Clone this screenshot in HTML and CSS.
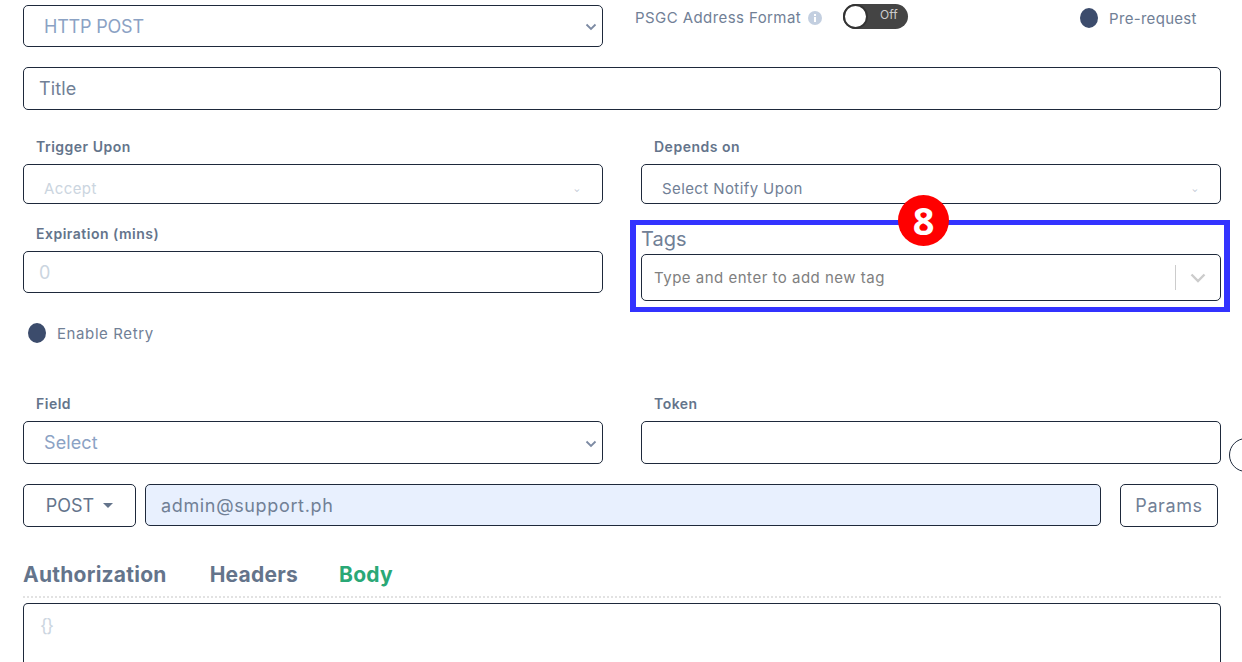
FILE: index.html
```html
<!DOCTYPE html>
<html lang="en">
<head>
<meta charset="utf-8">
<title>Request form</title>
<link rel="stylesheet" href="styles.css">
</head>
<body>
<main class="form">
  <div class="row top-row">
    <div class="box select-box h42"><span class="val blue-text http">HTTP POST</span>
      <svg class="chev" width="12" height="8" viewBox="0 0 12 8"><path d="M1.500 1.500 6 6l4.500-4.500" fill="none" stroke="#7c8aa3" stroke-width="1.800"/></svg>
    </div>
    <div class="top-right">
      <span class="psgc">PSGC Address Format</span>
      <svg class="info" width="14" height="14" viewBox="0 0 14 14"><circle cx="7" cy="7" r="7" fill="#c3cfe0"/><rect x="6" y="6" width="2" height="5" fill="#fff"/><rect x="6" y="3" width="2" height="2" fill="#fff"/></svg>
      <span class="toggle"><span class="knob"></span><span class="off">Off</span></span>
      <span class="check pre"><span class="dot"></span><span class="check-text">Pre-request</span></span>
    </div>
  </div>

  <div class="box title-box"><span class="val title-text">Title</span></div>

  <div class="row trigger-row">
    <div class="col">
      <label class="lbl">Trigger Upon</label>
      <div class="box small-select"><span class="small-val faint">Accept</span><span class="tiny">⌄</span></div>
    </div>
    <div class="col">
      <label class="lbl">Depends on</label>
      <div class="box small-select"><span class="small-val">Select Notify Upon</span><span class="tiny">⌄</span></div>
    </div>
  </div>

  <div class="row exp-row">
    <div class="col">
      <label class="lbl">Expiration (mins)</label>
      <div class="box h42"><span class="val zero">0</span></div>
      <div class="check retry"><span class="dot"></span><span class="check-text">Enable Retry</span></div>
    </div>
    <div class="col tags-col">
      <div class="tags-title">Tags</div>
      <div class="box tags-box">
        <span class="tags-ph">Type and enter to add new tag</span>
        <span class="tags-sep"></span>
        <svg class="tags-chev" width="16" height="10" viewBox="0 0 16 10"><path d="M1.500 1.500 8 8l6.500-6.500" fill="none" stroke="#ccc" stroke-width="2.400"/></svg>
      </div>
    </div>
  </div>

  <div class="row">
    <div class="col">
      <label class="lbl">Field</label>
      <div class="box select-box h43"><span class="val blue-text">Select</span>
        <svg class="chev" width="12" height="8" viewBox="0 0 12 8"><path d="M1.500 1.500 6 6l4.500-4.500" fill="none" stroke="#7c8aa3" stroke-width="1.800"/></svg>
      </div>
    </div>
    <div class="col">
      <label class="lbl">Token</label>
      <div class="box h43"></div>
    </div>
  </div>

  <div class="url-row">
    <div class="box method"><span>POST</span><span class="caret"></span></div>
    <div class="box url"><span>admin@support.ph</span></div>
    <div class="box params">Params</div>
  </div>

  <nav class="tabs">
    <span class="tab">Authorization</span>
    <span class="tab">Headers</span>
    <span class="tab active">Body</span>
  </nav>

  <div class="box body-box"><span class="braces">{}</span></div>
</main>

<div class="edge-circle"></div>
<div class="highlight"></div>
<div class="badge">8</div>
</body>
</html>
```
FILE: styles.css
```css
* { box-sizing: border-box; }
html, body { margin: 0; height: 662px; overflow: hidden; background: #fff; }
body { font-family: Inter, "Noto Sans", sans-serif; color: #64748b; position: relative; }

.form { padding: 5px 21px 0 23px; width: 1242px; }
.row { display: grid; grid-template-columns: 580px 580px; column-gap: 38px; }
.col { display: flex; flex-direction: column; min-width: 0; }

.box { border: 1px solid #1e293b; border-radius: 5px; background: #fff; display: flex; align-items: center; }
.h42 { height: 42px; }
.h43 { height: 43px; }
.select-box { justify-content: space-between; padding: 0 5px 0 20px; }
.val { font-size: 18px; letter-spacing: 0.1px; }
.blue-text { color: #8ba2c4; }
.http { letter-spacing: -0.2px; }
.chev { margin-top: 2px; }

.top-row { height: 42px; }
.top-right { display: flex; align-items: flex-start; margin-left: -6px; }
.psgc { font-size: 15px; letter-spacing: 0.42px; line-height: 18px; margin-top: 4px; color: #718096; }
.info { margin: 6px 0 0 7px; }
.toggle { margin: -1px 0 0 21px; width: 65px; height: 25px; background: #444; border-radius: 13px; display: flex; }
.knob { width: 25px; height: 25px; background: #fff; border: 2px solid #333; border-radius: 50%; }
.off { font-size: 12px; color: #ccc; margin: 3px 0 0 12px; }
.check { display: flex; align-items: center; }
.dot { width: 18px; height: 20px; border-radius: 50%; background: #3c4c6c; }
.check-text { font-size: 15px; letter-spacing: 0.3px; color: #718096; margin-left: 11px; }
.pre { margin: 3px 0 0 172px; }

.title-box { height: 43px; margin-top: 20px; width: 1198px; padding-left: 15px; }
.title-text { color: #718096; }

.trigger-row { margin-top: 27px; }
.lbl { font-size: 14px; letter-spacing: 0.5px; font-weight: 600; line-height: 20px; height: 20px; margin: 0 0 7px 13px; color: #64748b; }
.small-select { height: 40px; padding: 9px 22px 0 20px; justify-content: space-between; }
.small-val { font-size: 15px; letter-spacing: 0.4px; color: #718096; }
.faint { color: #cbd5e0; }
.tiny { font-size: 8px; color: #b8c2d0; line-height: 8px; }

.exp-row { margin-top: 20px; height: 170px; }
.zero { color: #cbd5e0; margin-left: 15px; }
.retry { margin: 30px 0 0 5px; }
.retry .check-text { letter-spacing: 0.6px; }

.tags-col { margin-top: 5px; }
.tags-title { font-size: 20px; line-height: 20px; height: 25px; color: #718096; }
.tags-box { height: 47px; padding-left: 12px; }
.tags-ph { font-size: 15px; letter-spacing: 0.5px; color: #808080; flex: 1; }
.tags-sep { width: 1px; height: 25px; background: #ccc; }
.tags-chev { margin: 1px 14px 0 14px; }

.url-row { display: flex; margin-top: 20px; align-items: flex-start; width: 1198px; }
.method { width: 113px; height: 43px; justify-content: center; gap: 9px; font-size: 18px; color: #64748b; }
.caret { width: 0; height: 0; border-left: 5px solid transparent; border-right: 5px solid transparent; border-top: 5px solid #64748b; }
.url { width: 956px; height: 42px; margin-left: 9px; background: #e8f0fe; padding-left: 15px; font-size: 18px; letter-spacing: 0.65px; color: #718096; }
.params { width: 98px; height: 43px; margin-left: 19px; justify-content: center; font-size: 18px; letter-spacing: 0.6px; color: #718096; }

.tabs { display: flex; margin-top: 35px; height: 36px; border-bottom: 2px dotted #e2e2e2; width: 1198px; align-items: flex-start; }
.tab { font-size: 21px; letter-spacing: 0.25px; font-weight: 700; line-height: 26px; color: #64748b; margin-right: 43px; }
.tab + .tab { margin-right: 41px; }
.tab.active { color: #2aa876; }

.body-box { width: 1198px; height: 120px; margin-top: 5px; align-items: flex-start; padding: 11px 16px; border-bottom: 0; border-radius: 5px 5px 0 0; }
.braces { font-size: 18px; letter-spacing: -1.5px; color: #cbd5e0; }

.edge-circle { position: absolute; left: 1229px; top: 438px; width: 34px; height: 34px; border: 1px solid #1e293b; border-radius: 50%; background: #fff; }
.highlight { position: absolute; left: 630px; top: 220px; width: 600px; height: 92px; border: solid #3333ff; border-width: 5px 6px; }
.badge { position: absolute; left: 898px; top: 195px; width: 51px; height: 51px; border-radius: 50%; background: #ff0000; color: #fff; font-size: 38px; font-weight: 700; font-family: "Open Sans", sans-serif; line-height: 51px; text-align: center; }
```
